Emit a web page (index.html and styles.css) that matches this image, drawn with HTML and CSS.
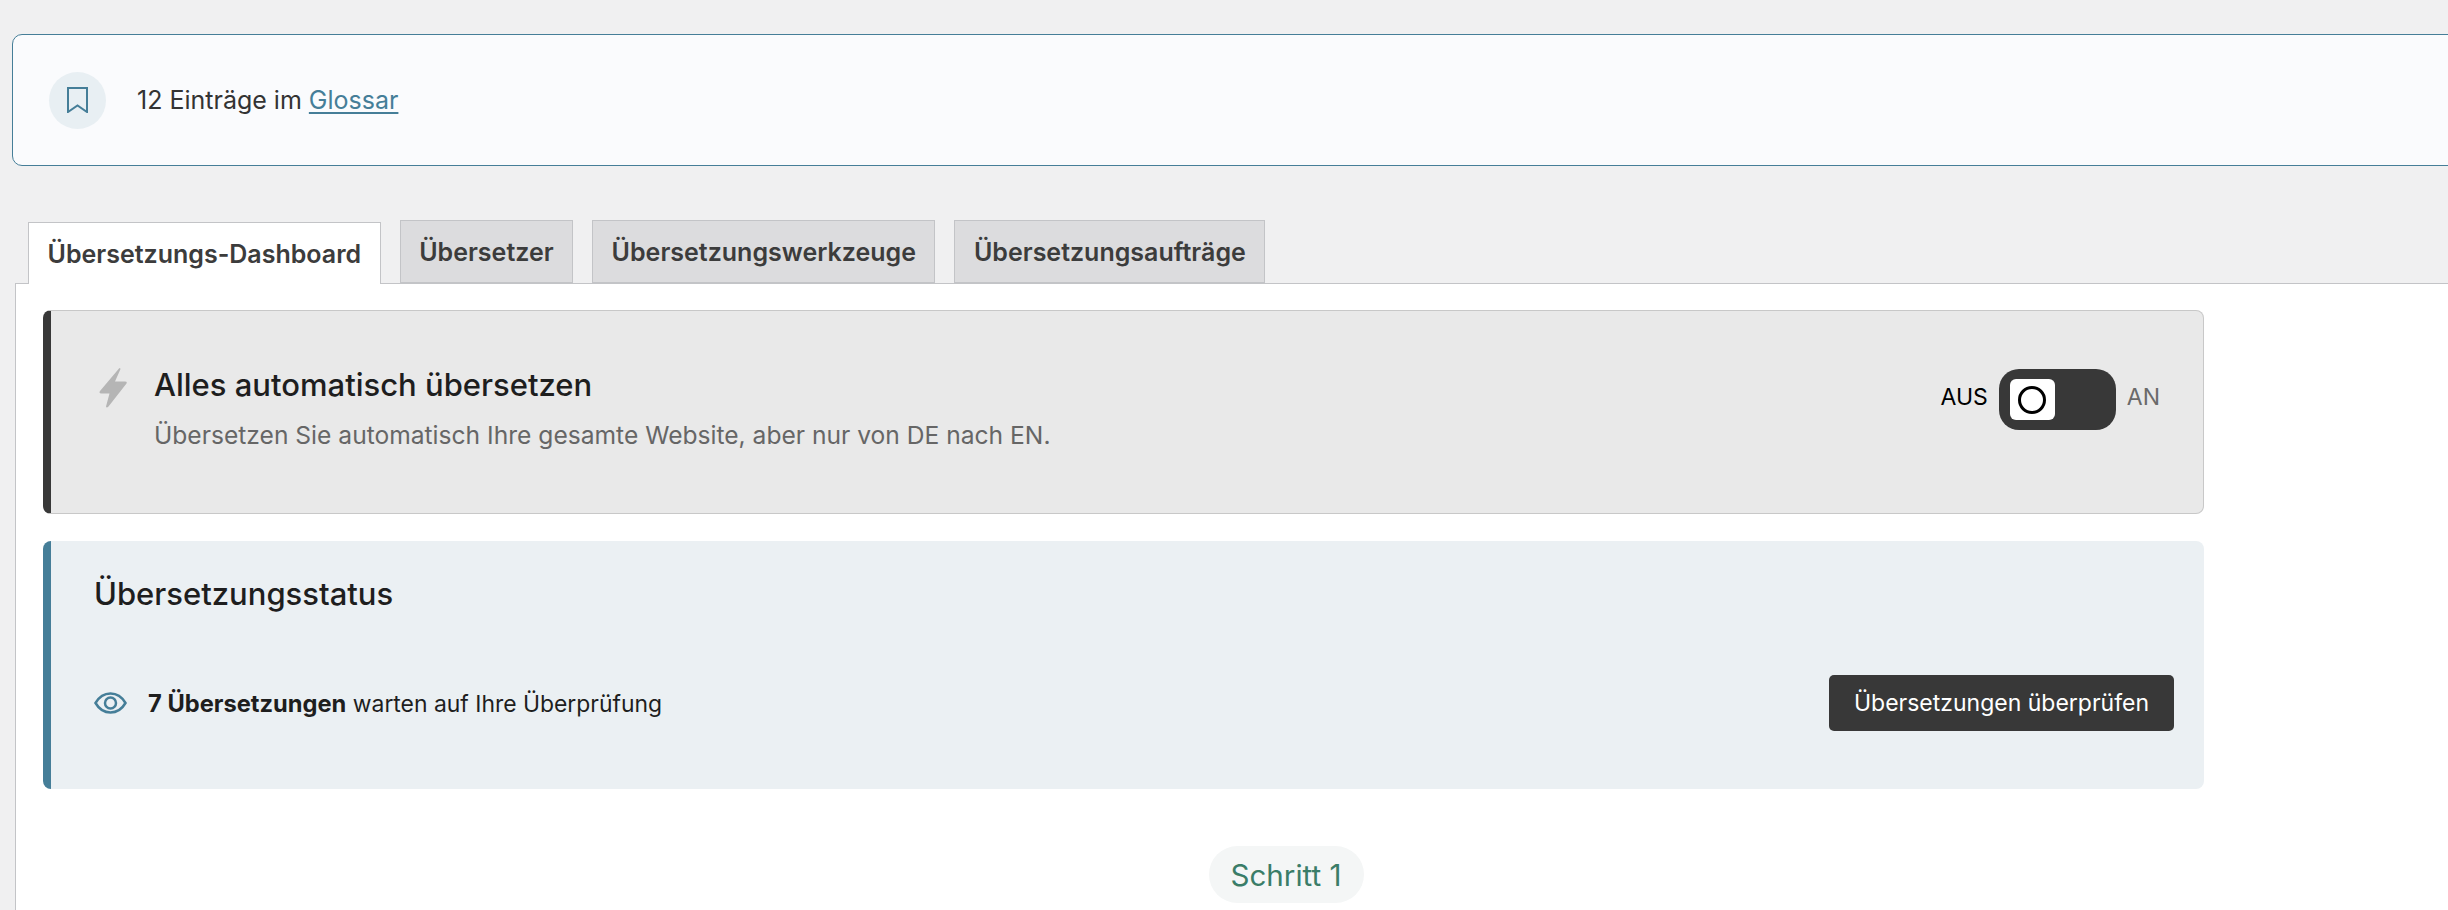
FILE: index.html
```html
<!DOCTYPE html>
<html lang="de">
<head>
<meta charset="utf-8">
<title>Übersetzungs-Dashboard</title>
<link rel="stylesheet" href="styles.css">
</head>
<body>
<div class="page">
  <div class="notice">
    <span class="notice-icon">
      <svg width="21" height="26" viewBox="0 0 21 26" fill="none" stroke="#457e98" stroke-width="2"><path d="M1 1h19v24l-9.500-6.500L1 25z"/></svg>
    </span>
    <span class="notice-text">12 Einträge im <a href="#" class="link">Glossar</a></span>
  </div>
  <nav class="tabs">
    <a href="#" class="tab tab-active">Übersetzungs-Dashboard</a>
    <a href="#" class="tab">Übersetzer</a>
    <a href="#" class="tab">Übersetzungswerkzeuge</a>
    <a href="#" class="tab">Übersetzungsaufträge</a>
  </nav>
  <main class="panel">
    <section class="card card-auto">
      <svg class="bolt" width="28" height="40" viewBox="0 0 28 40" fill="#b5b5b5"><path d="M20 0.500 L1 23 Q-0.500 25.500 2.500 25.500 L10.500 25.500 L7 38.500 Q7.500 40.500 9.500 38.500 L27.500 15.500 Q28.500 13.500 26 13.500 L16 13.500 L21.500 1 Q21 -0.500 20 0.500 Z"/></svg>
      <div class="auto-text">
        <h2 class="card-title">Alles automatisch übersetzen</h2>
        <p class="auto-desc">Übersetzen Sie automatisch Ihre gesamte Website, aber nur von DE nach EN.</p>
      </div>
      <div class="switch">
        <span class="switch-off">AUS</span>
        <span class="track"><span class="knob"><span class="knob-ring"></span></span></span>
        <span class="switch-on">AN</span>
      </div>
    </section>
    <section class="card card-status">
      <h2 class="card-title">Übersetzungsstatus</h2>
      <div class="status-row">
        <svg width="33" height="22" viewBox="0 0 33 22" fill="none" stroke="#457e98" stroke-width="2.500"><path d="M1.500 11C5 5 10 1.500 16.500 1.500S28 5 31.500 11C28 17 23 20.500 16.500 20.500S5 17 1.500 11Z"/><circle cx="16.500" cy="11" r="5.500"/></svg>
        <span class="status-text"><strong>7 Übersetzungen</strong> warten auf Ihre Überprüfung</span>
        <a href="#" class="btn">Übersetzungen überprüfen</a>
      </div>
    </section>
    <div class="step"><span class="step-pill">Schritt 1</span></div>
  </main>
</div>
</body>
</html>
```
FILE: styles.css
```css
* { box-sizing: border-box; }
html, body { margin: 0; height: 910px; overflow: hidden; background: #f0f0f1; }
body { font-family: Inter, "Liberation Sans", sans-serif; color: #1e1e1e; }
.page { width: 2600px; padding-top: 34px; }

.notice {
  display: flex; align-items: center; gap: 31px;
  margin-left: 12px; height: 132px; padding-left: 36px;
  background: #fafbfd; border: 1px solid #457e98; border-radius: 10px;
}
.notice-icon {
  display: flex; align-items: center; justify-content: center;
  width: 57px; height: 57px; border-radius: 50%; background: #e8eff3;
}
.notice-text { font-size: 25px; color: #333; }
.link { color: #457e98; text-decoration: underline; text-underline-offset: 3px; }

.tabs { display: flex; align-items: flex-end; gap: 19px; margin: 54px 0 0 28px; height: 63px; }
.tab {
  display: flex; align-items: center; justify-content: center;
  height: 63px; padding: 0 18.5px; font-size: 25px; font-weight: 600; color: #3c3c3c;
  text-decoration: none; background: #dcdcde; border: 1px solid #c3c4c7; border-bottom: 1px solid #c3c4c7;
}
.tab-active {
  height: 62px; margin-bottom: -1px; background: #fff; border-bottom: 0; position: relative; z-index: 1; padding-top: 1px;
}

.panel {
  margin-left: 15px; height: 640px; padding: 26px 0 0 27px;
  background: #fff; border-top: 1px solid #c3c4c7; border-left: 1px solid #c3c4c7;
}
.card { width: 2161px; border-radius: 8px; }
.card-title { margin: 0; font-size: 31px; font-weight: 500; line-height: 40px; color: #1e1e1e; }

.card-auto {
  display: flex; align-items: flex-start; height: 204px; padding: 54px 43px 0 48px;
  background: #e9e9e9; border: 1px solid #c8c8c8; border-left: 8px solid #383838;
}
.bolt { margin-top: 3px; }
.auto-text { flex: 1; margin-left: 27px; }
.auto-desc { margin: 14px 0 0; font-size: 24.6px; line-height: 32px; color: #666; }

.switch { display: flex; align-items: center; gap: 11px; margin-top: 4px; font-size: 23px; }
.switch-off { color: #000; padding-bottom: 5px; }
.switch-on { color: #6a6a6a; padding-bottom: 5px; }
.track { display: flex; align-items: center; width: 117px; height: 61px; padding-left: 11px; border-radius: 20px; background: #383838; }
.knob { display: flex; align-items: center; justify-content: center; width: 45px; height: 41px; border-radius: 6px; background: #fff; }
.knob-ring { width: 28px; height: 28px; border: 3px solid #000; border-radius: 50%; }

.card-status {
  height: 248px; margin-top: 27px; padding: 33px 30px 0 43px;
  background: #ebf0f3; border-left: 8px solid #457e98;
}
.status-row { display: flex; align-items: center; margin-top: 61px; height: 56px; }
.status-text { flex: 1; margin-left: 21px; font-size: 22.9px; color: #1e1e1e; }
.status-text strong { font-size: 23.7px; font-weight: 700; }
.btn {
  display: flex; align-items: center; justify-content: center;
  width: 345px; height: 56px; border-radius: 5px; background: #383838; color: #fff;
  font-size: 23px; text-decoration: none;
}

.step { display: flex; justify-content: center; margin-top: 57px; width: 2486px; }
.step-pill {
  display: flex; align-items: center; justify-content: center;
  width: 155px; height: 57px; border-radius: 29px; background: #f4f6f6; color: #3a7d68; font-size: 29.6px;
}
```
